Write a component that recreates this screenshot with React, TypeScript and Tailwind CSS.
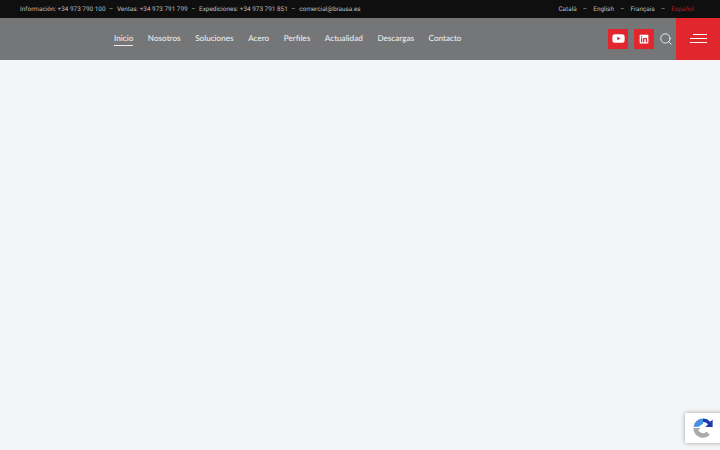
import { Search } from "lucide-react";
import { FaLinkedin, FaYoutube } from "react-icons/fa";

const contacts = [
  "Información: +34 973 790 100",
  "Ventas: +34 973 791 799",
  "Expediciones: +34 973 791 851",
  "comercial@brausa.es",
];
const languages = ["Català", "English", "Français"];
const links = ["Nosotros", "Soluciones", "Acero", "Perfiles", "Actualidad", "Descargas", "Contacto"];

export default function App() {
  return (
    <div className="relative flex h-[450px] w-[720px] flex-col overflow-hidden bg-[#f4f5f7] font-['Roboto',sans-serif] [text-rendering:geometricPrecision]">
      {/* barra superior */}
      <div className="flex h-[17.5px] items-center justify-between bg-[#0f0f0f] pl-5 pr-[26px] pt-px text-[6.4px] leading-none text-[#bdbdbd]">
        <div className="flex items-center">
          {contacts.map((c, i) => (
            <span key={c} className="flex items-center">
              {i > 0 && <span className="px-[3.6px]">–</span>}
              {c}
            </span>
          ))}
        </div>
        <div className="flex items-center">
          {languages.map((l) => (
            <span key={l} className="flex items-center">
              {l}
              <span className="px-[6.2px]">–</span>
            </span>
          ))}
          <span className="text-[#a32027]">Español</span>
        </div>
      </div>

      {/* navegación */}
      <header className="flex h-[42.5px] items-center bg-[#757677] pl-[114px]">
        <nav className="mt-px flex items-baseline gap-[14.6px] font-['Lato',sans-serif] text-[8.15px] font-medium text-[#ececec]">
          <a className="border-b border-[#ececec] pb-px">Inicio</a>
          {links.map((l) => (
            <a key={l}>{l}</a>
          ))}
        </nav>
        <div className="ml-auto flex h-full items-center">
          <a className="flex h-5 w-5 items-center justify-center bg-[#e1262d] text-white">
            <FaYoutube size={13} />
          </a>
          <a className="ml-[6px] flex h-5 w-5 items-center justify-center bg-[#e1262d] text-white">
            <FaLinkedin size={10} />
          </a>
          <Search size={14} strokeWidth={1.4} className="ml-[5px] mr-[3px] mt-px text-white" />
          <button className="flex h-full w-11 flex-col items-center justify-center gap-[3px] bg-[#e1262d]">
            <span className="ml-[3px] h-px w-[14px] bg-white" />
            <span className="h-px w-[17px] bg-white" />
            <span className="h-px w-[17px] bg-white" />
          </button>
        </div>
      </header>

      {/* insignia reCAPTCHA */}
      <div className="absolute left-[685px] top-[413px] flex h-[30px] w-[40px] items-center rounded-[2px] bg-white pl-[7px] shadow-[0_0_4px_rgba(0,0,0,0.35)]">
        <svg viewBox="0 0 24 24" className="h-[22px] w-[22px]">
          <path d="M12 1.500a10.500 10.500 0 0 1 8 3.700L22.500 2.700V11H14.500l3-3A7 7 0 0 0 12 5.500z" fill="#1c3aa9" />
          <path d="M12 1.500A10.500 10.500 0 0 0 1.600 10.500H7.500L9.500 9A4 4 0 0 1 12 7.500z" fill="#4a90e2" />
          <path d="M1.500 12a10.500 10.500 0 0 0 18 7.400l-3.500-3.200a6 6 0 0 1-9-1.400l2-2.800z" fill="#ababab" />
        </svg>
      </div>
    </div>
  );
}
